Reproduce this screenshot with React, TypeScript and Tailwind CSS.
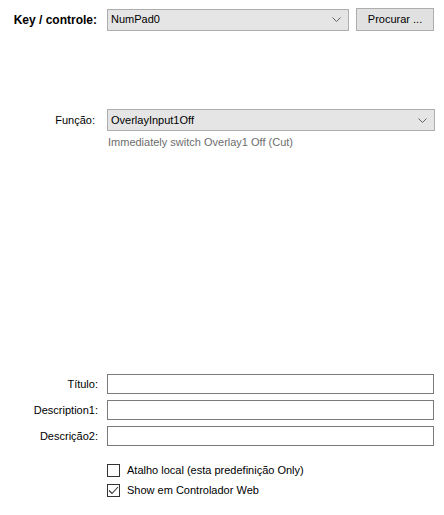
import React from 'react';

const font = { fontFamily: '"Liberation Sans", Arial, sans-serif' };

function Chevron() {
  return (
    <svg width="9" height="5" viewBox="0 0 9 5" className="shrink-0">
      <path d="M0.5 0.5 L4.5 4.5 L8.5 0.5" fill="none" stroke="#606060" strokeWidth="1" />
    </svg>
  );
}

function Combo({ value }: { value: string }) {
  return (
    <div className="flex h-[22px] flex-1 items-center justify-between border border-[#adadad] bg-[#e5e5e5] pl-[3px] pr-[7px] text-[11px] leading-[13px] text-black">
      <span>{value}</span>
      <Chevron />
    </div>
  );
}

function TextRow({ label }: { label: string }) {
  return (
    <div className="flex items-center">
      <div className="w-[107px] pr-[9px] text-right text-[11px] leading-[13px] text-black">{label}</div>
      <div className="h-[20px] w-[327px] border border-[#7a7a7a] bg-white" />
    </div>
  );
}

function Check({ checked, label }: { checked?: boolean; label: string }) {
  return (
    <div className="flex items-center gap-[7px]">
      <div className="flex h-[13px] w-[13px] items-center justify-center border border-[#333333] bg-white">
        {checked && (
          <svg width="11" height="9" viewBox="0 0 11 9">
            <path d="M1 4.5 L4 7.5 L10 1" fill="none" stroke="#333333" strokeWidth="1.1" />
          </svg>
        )}
      </div>
      <span className="text-[11px] leading-[13px] text-black">{label}</span>
    </div>
  );
}

export default function App() {
  return (
    <div className="h-[515px] w-[444px] bg-white" style={font}>
      <div className="flex items-center pt-[8px]">
        <div className="w-[107px] pr-[10px] pl-[10px] text-right text-[12px] leading-[14px] font-bold text-black">Key / controle:</div>
        <Combo value="NumPad0" />
        <button className="ml-[7px] mr-[10px] h-[23px] w-[78px] border border-[#adadad] bg-[#e1e1e1] text-[11px] leading-[13px] text-black">
          Procurar ...
        </button>
      </div>

      <div className="mt-[78px] flex items-center pr-[9px]">
        <div className="w-[107px] pr-[12px] text-right text-[11px] leading-[13px] text-black">Função:</div>
        <Combo value="OverlayInput1Off" />
      </div>
      <div className="mt-[5px] pl-[108px] text-[11px] leading-[13px] text-[#6d6d6d]">Immediately switch Overlay1 Off (Cut)</div>

      <div className="mt-[225px] flex flex-col gap-[6px]">
        <TextRow label="Título:" />
        <TextRow label="Description1:" />
        <TextRow label="Descrição2:" />
      </div>

      <div className="mt-[18px] flex flex-col gap-[7px] pl-[107px]">
        <Check label="Atalho local (esta predefinição Only)" />
        <Check checked label="Show em Controlador Web" />
      </div>
    </div>
  );
}
